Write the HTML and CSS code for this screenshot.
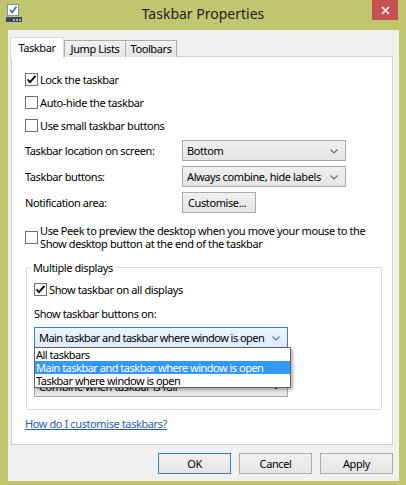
FILE: index.html
```html
<!DOCTYPE html>
<html lang="en">
<head>
    <meta charset="UTF-8">
    <title>Taskbar Properties</title>
    <link rel="stylesheet" href="styles.css">
</head>
<body>
    <div class="window">
        <div class="titlebar">
            <svg class="app-icon" width="16" height="19" viewBox="0 0 16 19">
                <rect x="1.5" y="1.5" width="11" height="11" fill="#fff" stroke="#8a8f99"/>
                <path d="M4 7 L6.2 9.4 L10.5 3.5" fill="none" stroke="#2b6cc4" stroke-width="1.6"/>
                <rect x="0" y="14" width="16" height="5" fill="#3b4656"/>
                <rect x="7" y="16" width="2" height="2" fill="#9fb3cc"/>
                <rect x="10" y="16" width="2" height="2" fill="#9fb3cc"/>
                <rect x="13" y="16" width="2" height="2" fill="#9fb3cc"/>
            </svg>
            <div class="title">Taskbar Properties</div>
            <div class="close">
                <svg width="9" height="9" viewBox="0 0 9 9">
                    <path d="M1 1 L8 8 M8 1 L1 8" stroke="#fff" stroke-width="1.6"/>
                </svg>
            </div>
        </div>
        <div class="client">
            <div class="tabs">
                <div class="tab active">Taskbar</div>
                <div class="tab">Jump Lists</div>
                <div class="tab">Toolbars</div>
            </div>
            <div class="panel">
                <div class="check first">
                    <span class="box">
                        <svg width="11" height="11" viewBox="0 0 11 11"><path d="M1.5 5.5 L4 8.2 L9.5 1.8" fill="none" stroke="#000" stroke-width="1.8"/></svg>
                    </span>
                    Lock the taskbar
                </div>
                <div class="check"><span class="box"></span>Auto-hide the taskbar</div>
                <div class="check"><span class="box"></span>Use small taskbar buttons</div>

                <div class="field location">
                    <span class="field-label">Taskbar location on screen:</span>
                    <div class="combo wide">Bottom
                        <svg class="chev" width="8" height="5" viewBox="0 0 8 5"><path d="M0.5 0.5 L4 4 L7.5 0.5" fill="none" stroke="#6d6d6d" stroke-width="1.2"/></svg>
                    </div>
                </div>
                <div class="field buttons-field">
                    <span class="field-label">Taskbar buttons:</span>
                    <div class="combo wide">Always combine, hide labels
                        <svg class="chev" width="8" height="5" viewBox="0 0 8 5"><path d="M0.5 0.5 L4 4 L7.5 0.5" fill="none" stroke="#6d6d6d" stroke-width="1.2"/></svg>
                    </div>
                </div>
                <div class="field notify">
                    <span class="field-label">Notification area:</span>
                    <div class="button customise">Customise...</div>
                </div>

                <div class="check peek">
                    <span class="box"></span>
                    <span>Use Peek to preview the desktop when you move your mouse to the<br>Show desktop button at the end of the taskbar</span>
                </div>

                <fieldset class="group">
                    <legend>Multiple displays</legend>
                    <div class="check">
                        <span class="box">
                            <svg width="11" height="11" viewBox="0 0 11 11"><path d="M1.5 5.5 L4 8.2 L9.5 1.8" fill="none" stroke="#000" stroke-width="1.8"/></svg>
                        </span>
                        Show taskbar on all displays
                    </div>
                    <div class="group-label">Show taskbar buttons on:</div>
                    <div class="combo-wrap">
                        <div class="combo focused">Main taskbar and taskbar where window is open
                            <svg class="chev" width="8" height="5" viewBox="0 0 8 5"><path d="M0.5 0.5 L4 4 L7.5 0.5" fill="none" stroke="#5a7fa6" stroke-width="1.2"/></svg>
                        </div>
                        <ul class="dropdown">
                            <li>All taskbars</li>
                            <li class="selected">Main taskbar and taskbar where window is open</li>
                            <li>Taskbar where window is open</li>
                        </ul>
                    </div>
                    <!-- second combo sits under the open list, only its lower edge shows -->
                    <div class="combo under">Combine when taskbar is full
                        <svg class="chev" width="8" height="5" viewBox="0 0 8 5"><path d="M0.5 0.5 L4 4 L7.5 0.5" fill="none" stroke="#6d6d6d" stroke-width="1.2"/></svg>
                    </div>
                </fieldset>

                <a class="help" href="#">How do I customise taskbars?</a>
            </div>
            <div class="actions">
                <div class="button default">OK</div>
                <div class="button">Cancel</div>
                <div class="button">Apply</div>
            </div>
        </div>
    </div>
</body>
</html>
```

FILE: styles.css
```css
body {
    margin: 0;
    font-family: "Noto Sans", "Open Sans", Arial, sans-serif;
    font-size: 11px;
    letter-spacing: -0.4px;
    color: #000;
    background: #c0c66e;
}
.window {
    width: 406px;
    height: 485px;
    display: flex;
    flex-direction: column;
}
.titlebar {
    height: 30px;
    display: grid;
    grid-template-columns: 1fr auto 1fr;
}
.app-icon {
    margin: 3px 0 0 6px;
}
.title {
    font-size: 14px;
    letter-spacing: 0;
    color: #222;
    line-height: 28px;
}
.close {
    justify-self: end;
    width: 26px;
    height: 20px;
    margin-right: 8px;
    background: #c75050;
    display: flex;
    align-items: center;
    justify-content: center;
}
.client {
    flex: 1;
    margin: 0 7px 4px 8px;
    background: #f0f0f0;
    padding: 7px 6px 0 3px;
}
.tabs {
    display: flex;
    align-items: flex-end;
    height: 20px;
    position: relative;
    z-index: 1;
    margin-bottom: -1px;
}
.tab {
    height: 17px;
    line-height: 16px;
    box-sizing: border-box;
    white-space: nowrap;
    border: 1px solid #acacac;
    border-bottom: none;
    background: linear-gradient(#f0f0f0, #e5e5e5);
    margin-left: -1px;
    text-align: center;
}
.tab:nth-child(2) { width: 62px; }
.tab:nth-child(3) { width: 52px; }
.tab.active {
    height: 21px;
    width: 54px;
    line-height: 19px;
    background: #fff;
    border-color: #d9d9d9;
    margin-right: 1px;
    margin-bottom: -1px;
}
.panel {
    height: 389px;
    box-sizing: border-box;
    background: #fff;
    border: 1px solid #d0d0d0;
    padding: 14px 0 0 13px;
}
.check {
    display: flex;
    align-items: center;
    height: 16px;
    margin-top: 7px;
    white-space: nowrap;
}
.check.first {
    margin-top: 0;
}
.box {
    width: 13px;
    height: 13px;
    box-sizing: border-box;
    border: 1px solid #707070;
    background: #fff;
    margin-right: 2px;
    flex: none;
    display: flex;
    align-items: center;
    justify-content: center;
}
.field {
    display: flex;
    align-items: center;
    margin-top: 5px;
}
.field.location {
    margin-top: 7px;
}
.field-label {
    width: 157px;
}
.combo, .button {
    height: 21px;
    box-sizing: border-box;
    border: 1px solid #acacac;
    background: linear-gradient(#f0f0f0, #e5e5e5);
    padding-left: 4px;
    line-height: 19px;
    white-space: nowrap;
}
.combo {
    position: relative;
}
.combo.wide {
    width: 164px;
}
.chev {
    position: absolute;
    right: 7px;
    top: 8px;
}
.button.customise {
    width: 74px;
    padding-left: 5px;
}
.check.peek {
    height: 28px;
    margin-top: 10px;
    line-height: 13px;
}
.group {
    margin: 9px 10px 0 1px;
    padding: 0 0 12px 7px;
    border: 1px solid #dcdcdc;
    border-radius: 2px;
}
.group legend {
    padding: 0 2px;
    margin-left: -3px;
    line-height: 15px;
}
.group .check {
    margin-top: 6px;
}
.group-label {
    height: 16px;
    line-height: 16px;
    margin-top: 9px;
}
.combo-wrap {
    position: relative;
    width: 254px;
    margin-top: 5px;
}
.combo.focused {
    border-color: #3c7fb1;
    background: linear-gradient(#ecf4fc, #dcecfc);
    letter-spacing: -0.55px;
}
.combo.under {
    width: 254px;
    margin-top: 28px;
}
.dropdown {
    position: absolute;
    left: 0;
    top: 20px;
    width: 255px;
    margin: 0;
    padding: 0;
    list-style: none;
    background: #fff;
    border: 1px solid #646464;
    box-shadow: 2px 2px 3px rgba(0, 0, 0, 0.3);
    z-index: 2;
    letter-spacing: -0.5px;
}
.dropdown li {
    height: 13px;
    line-height: 13px;
    padding-left: 1px;
    white-space: nowrap;
}
.dropdown li.selected {
    background: #3399ff;
    color: #fff;
}
.help {
    display: block;
    width: max-content;
    margin-top: 6px;
    line-height: 16px;
    color: #1e62b0;
    text-decoration: underline;
}
.actions {
    display: flex;
    justify-content: flex-end;
    gap: 8px;
    margin-top: 8px;
}
.actions .button {
    width: 73px;
    padding: 0;
    text-align: center;
}
.button.default {
    border-color: #3c7fb1;
}
```
